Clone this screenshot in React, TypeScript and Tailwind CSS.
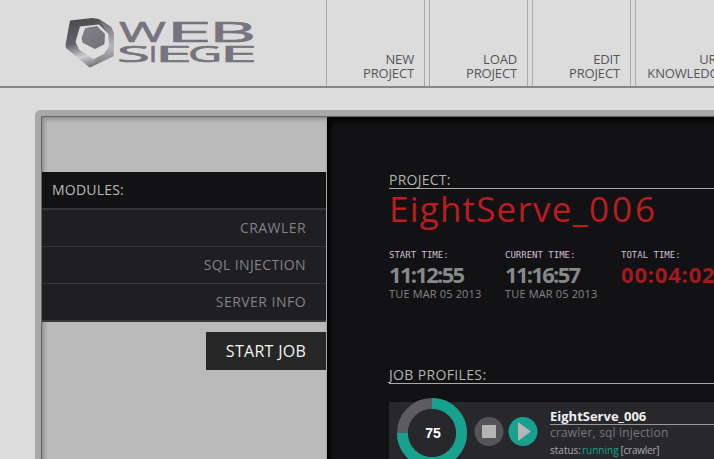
import type { ReactNode } from 'react';

function Logo() {
  const top: [string, number, number][] = [['W', 119, 47], ['E', 166, 46], ['B', 209, 47]];
  const bottom: [string, number, number][] = [['S', 117, 33], ['I', 149, 8], ['E', 155, 37], ['G', 188, 34], ['E', 220, 37]];
  return (
    <svg className="block h-[86px] w-[326px] shrink-0" viewBox="0 0 326 86" role="img" aria-label="Web Siege">
      <defs>
        <linearGradient id="rim" x1="0.35" y1="0" x2="0.6" y2="1">
          <stop offset="0" stopColor="#4d4b52" />
          <stop offset="0.45" stopColor="#656369" />
          <stop offset="0.74" stopColor="#d0ced3" />
          <stop offset="1" stopColor="#68656d" />
        </linearGradient>
        <linearGradient id="side" x1="0" y1="0" x2="0" y2="1">
          <stop offset="0" stopColor="#69666e" />
          <stop offset=".55" stopColor="#b9b7bd" />
          <stop offset="1" stopColor="#77747c" />
        </linearGradient>
        <linearGradient id="core" x1="0" y1="0" x2="1" y2="1">
          <stop offset="0" stopColor="#85818b" />
          <stop offset="1" stopColor="#737078" />
        </linearGradient>
      </defs>
      <path d="M70 20.5 92 18 99 19 111 27 114 34 113.5 56 89.5 67.5 66 48 65.5 45Z" fill="url(#rim)" />
      <path d="M98 19 111 27 114 34 113.5 56 90 67.5 98 57 109 48 109 35Z" fill="url(#side)" />
      <path d="M80 26.5 99 24.5 108.5 34 109 46 104 54 93 59 79 49.5 75.5 42Z" fill="#dedede" />
      <path d="M85.5 28.5 97 26.5 104.5 34 104 44 95 48.5 83 42.5 82 38Z" fill="url(#core)" stroke="#65616c" strokeWidth=".7" />
      <g fill="#77737f" stroke="#77737f" strokeWidth=".6" fontFamily="'Open Sans', sans-serif" fontWeight="500">
        {top.map(([t, x, w]) => <text key={x} x={x} y="41.7" fontSize="28" textLength={w} lengthAdjust="spacingAndGlyphs">{t}</text>)}
        {bottom.map(([t, x, w]) => <text key={x} x={x} y="61.7" fontSize="21.5" textLength={w} lengthAdjust="spacingAndGlyphs">{t}</text>)}
      </g>
    </svg>
  );
}

function Tab({ first, second, wide }: { first: string; second: string; wide?: boolean }) {
  return (
    <a className={`mr-1 flex h-[86px] shrink-0 flex-col border-x border-[#a9a9ad] pt-[52px] pr-2.5 text-right text-[13px] leading-[14px] tracking-[-0.15px] text-[#55555a] ${wide ? 'w-[102px]' : 'w-[99px]'}`}>
      <span className={wide ? 'pr-[3px]' : ''}>{first}</span>
      <span>{second}</span>
    </a>
  );
}

function Module({ children, className }: { children: ReactNode; className: string }) {
  return <li className={`flex items-center justify-end border-[#38383b] pr-5 text-sm text-[#828285] ${className}`}>{children}</li>;
}

function Clock({ label, time, date, red }: { label: string; time: string; date?: string; red?: boolean }) {
  return (
    <div className="w-[116px] shrink-0 whitespace-nowrap">
      <div className="h-4 pt-px font-['DejaVu_Sans_Mono',monospace] text-[9px] leading-4 text-[#d0bfd4]">{label}</div>
      <div className={`h-[25px] text-[22px] leading-[25px] font-bold ${red ? 'tracking-[0.8px] text-[#a4191d]' : 'tracking-[-1.7px] text-[#858989]'}`}>{time}</div>
      <div className="h-[14px] text-[11px] leading-[14px] tracking-[0.15px] text-[#858585]">{date}</div>
    </div>
  );
}

export default function App() {
  return (
    <div className="h-[459px] w-[714px] overflow-hidden bg-[#dcdcdc] font-['Open_Sans',sans-serif]">
      <header className="flex h-[88px] w-[900px] border-b-2 border-[#868589]">
        <Logo />
        <Tab first="NEW" second="PROJECT" />
        <Tab first="LOAD" second="PROJECT" />
        <Tab first="EDIT" second="PROJECT" />
        <Tab first="URL" second="KNOWLEDGE" wide />
      </header>
      <div className="mt-[22px] ml-[35px] h-[500px] w-[900px] rounded-tl-md border-t-6 border-l-6 border-[#a9a9a9]">
        <div className="flex h-full border-t border-l border-[#666]">
          <aside className="flex w-[285px] shrink-0 flex-col border-r border-[#a6a6a6] bg-[#bababa] pt-[55px] shadow-[inset_3px_3px_4px_-1px_#888]">
            <h2 className="flex h-[38px] shrink-0 items-center border-b-2 border-[#333336] bg-[#121214] pl-2.5 text-sm tracking-[0.2px] text-[#b9b9b9]">MODULES:</h2>
            <ul className="bg-[#1f1e23]">
              <Module className="h-[37px] border-b tracking-[0.45px]">CRAWLER</Module>
              <Module className="h-[37px] border-b tracking-[0.37px]">SQL INJECTION</Module>
              <Module className="h-[38px] border-b-2 tracking-[0.47px]">SERVER INFO</Module>
            </ul>
            <button className="mt-2.5 flex h-[38px] w-[120px] shrink-0 items-center justify-center self-end bg-[#262626] pb-px text-base tracking-[0.3px] text-[#f4f4f4]">START JOB</button>
          </aside>
          <main className="min-w-0 flex-1 bg-[#121214] pt-[55px] pl-[62px] shadow-[inset_4px_4px_6px_-1px_#000]">
            <h2 className="h-[17px] border-b border-[#a8a8a8] text-sm leading-4 tracking-[0.25px] text-[#b3b3b3]">PROJECT:</h2>
            <h1 className="mt-[1px] h-[40px] text-[35px] leading-[38px] tracking-[1.2px] whitespace-nowrap text-[#b91d1f]">EightServe_<span className="tracking-[3px]">006</span></h1>
            <div className="mt-[16px] flex">
              <Clock label="START TIME:" time="11:12:55" date="TUE MAR 05 2013" />
              <Clock label="CURRENT TIME:" time="11:16:57" date="TUE MAR 05 2013" />
              <Clock label="TOTAL TIME:" time="00:04:02" red />
            </div>
            <h2 className="mt-[66px] h-[17px] border-b border-[#a8a8a8] text-sm leading-4 tracking-[0.35px] text-[#b3b3b3]">JOB PROFILES:</h2>
            <section className="mt-[18px] flex h-[80px] bg-[#28272c]">
              <svg className="block h-[80px] w-[161px] shrink-0 overflow-visible" viewBox="0 0 161 80">
                <circle cx="43" cy="31" r="29.5" fill="none" stroke="#5d5c61" strokeWidth="11" />
                <path d="M43 1.5A29.5 29.5 0 1 1 13.5 31" fill="none" stroke="#17a28f" strokeWidth="11" />
                <circle cx="43" cy="31" r="24" fill="#28272c" />
                <text x="44" y="36" textAnchor="middle" fontFamily="'Liberation Sans', Arial, sans-serif" fontWeight="700" fontSize="14" fill="#fff">75</text>
                <circle cx="100" cy="29.5" r="14.5" fill="#555459" />
                <path d="M93 23h14v13H93Z" fill="#b5b5b5" />
                <circle cx="134" cy="29.5" r="14.5" fill="#17a28f" />
                <path d="m129 20 13 9.5-13 9.5Z" fill="#b5b5b5" />
              </svg>
              <div className="flex-1 pt-[5px] whitespace-nowrap">
                <div className="h-[18px] border-b border-[#99999c] text-[13px] leading-[18px] font-bold text-[#f0f0f0]">EightServe_006</div>
                <div className="h-[17px] text-xs leading-4 tracking-[0.18px] text-[#77777d]">crawler, sql injection</div>
                <div className="flex text-[10px] leading-4 text-[#aaa]">
                  <span>status:</span><span className="ml-[1px] text-[#17a28f]">running</span><span className="ml-[2px] tracking-[-0.25px]">[crawler]</span>
                </div>
              </div>
            </section>
          </main>
        </div>
      </div>
    </div>
  );
}
